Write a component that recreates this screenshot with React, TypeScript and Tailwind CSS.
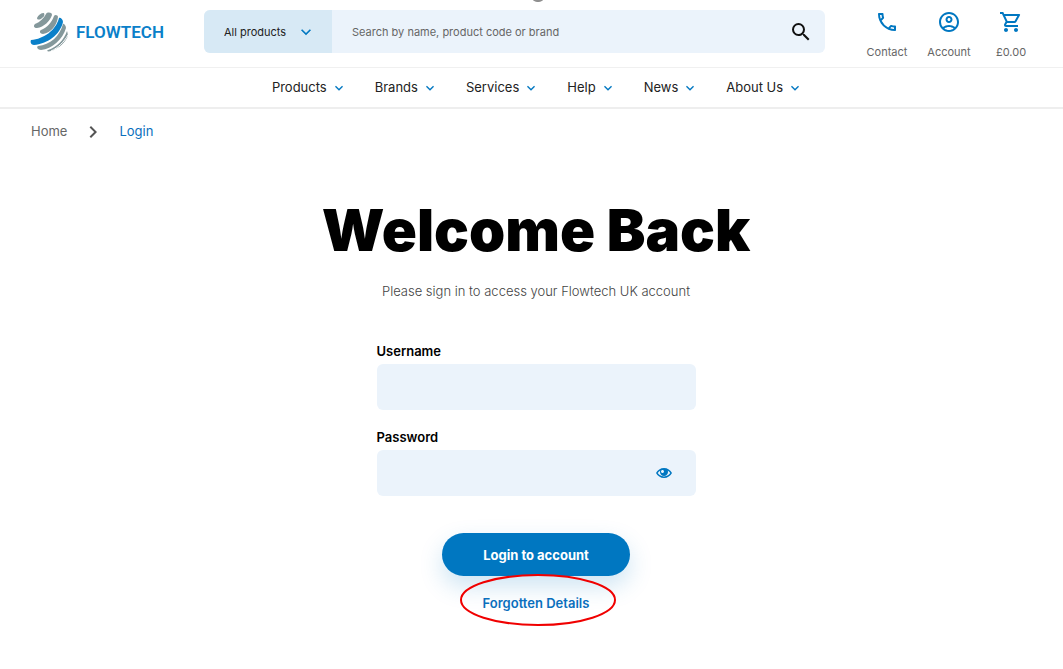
import { useState } from 'react';
import type { IconType } from 'react-icons';
import { ImEye } from 'react-icons/im';
import {
  MdChevronRight,
  MdExpandMore,
  MdOutlineAccountCircle,
  MdOutlinePhone,
  MdOutlineShoppingCart,
  MdSearch,
} from 'react-icons/md';

const NAV_ITEMS = ['Products', 'Brands', 'Services', 'Help', 'News', 'About Us'];

const HEADER_LINKS: { label: string; href: string; icon: IconType }[] = [
  { label: 'Contact', href: '#contact', icon: MdOutlinePhone },
  { label: 'Account', href: '#account', icon: MdOutlineAccountCircle },
  { label: '£0.00', href: '#basket', icon: MdOutlineShoppingCart },
];

export default function App() {
  return (
    <div className="min-h-screen overflow-hidden bg-white font-['Inter',sans-serif] text-[#222]">
      <Header />
      <MainNav />
      <Breadcrumb />
      <LoginForm />
    </div>
  );
}

function Header() {
  return (
    <header className="relative flex h-17 items-start border-b border-[#f0f0f0] pr-[21px] pl-[30px]">
      <span className="absolute -top-2 left-1/2 h-[10px] w-3 rounded-full bg-[#8f8f8f]" />

      <a href="#home" className="mt-3 flex w-[174px] shrink-0 items-center gap-2">
        <LogoMark />
        <span className="font-['Roboto','Liberation_Sans',sans-serif] text-[17px] leading-10 font-semibold text-[#0a80c9]">
          FLOWTECH
        </span>
      </a>

      <form
        role="search"
        onSubmit={(e) => e.preventDefault()}
        className="mt-[10px] flex h-[43px] flex-1 overflow-hidden rounded-md bg-[#ebf3fb]"
      >
        <div className="relative w-32 shrink-0 bg-[#d7e9f5]">
          <select
            aria-label="Search category"
            className="h-full w-full appearance-none pt-px pl-5 text-[11px] text-[#222] outline-none"
          >
            <option>All products</option>
          </select>
          <MdExpandMore className="pointer-events-none absolute top-3 right-4 size-5 text-[#0077c1]" />
        </div>
        <input
          type="search"
          aria-label="Search"
          placeholder="Search by name, product code or brand"
          className="min-w-0 flex-1 px-5 pt-px text-[11px] outline-none placeholder:text-[#666]"
        />
        <button type="submit" aria-label="Submit search" className="px-3">
          <MdSearch className="size-6 text-[#111]" />
        </button>
      </form>

      <div className="mt-[10px] ml-[31px] flex">
        {HEADER_LINKS.map(({ label, href, icon: Icon }) => (
          <a
            key={label}
            href={href}
            className="flex w-[62px] flex-col items-center gap-[10px] text-[11px] leading-4 text-[#666]"
          >
            <Icon className="size-6 text-[#0077c1]" />
            {label}
          </a>
        ))}
      </div>
    </header>
  );
}

function LogoMark() {
  return (
    <svg viewBox="0 0 38 40" className="h-10 w-[38px] shrink-0" fill="none" aria-hidden="true">
      <g fill="#84989b">
        <path d="M7 6C8 3 11 1 14 1C15 3 14 5 12 6C10 8 7 8 7 6Z" />
        <path d="M5 12C10 10 14 6 16 2C17 0 22 0 22 3C20 9 14 15 7 16C4 16 3 14 5 12Z" />
        <path d="M11 18C17 16 22 10 24 4C25 2 28 3 28 5C27 13 21 21 13 22C10 22 9 19 11 18Z" />
        <path d="M8 34C20 33 30 24 33 12C34 11 36 14 36 16C33 27 22 37 11 38C8 38 6 35 8 34Z" />
        <path d="M18 38C27 35 34 28 37 19C38 22 38 24 37 26C33 33 27 37 21 39C18 40 16 39 18 38Z" />
      </g>
      <path
        d="M1 28C14 27 26 18 29 6C30 5 33 7 33 10C30 23 17 32 4 33C1 33 0 30 1 28Z"
        fill="#0a80c9"
      />
      <g stroke="#fff" strokeWidth="1">
        <path d="M21 39C28 36 34 30 38 23" />
        <path d="M25 39C30 36 34 32 37 28" />
      </g>
    </svg>
  );
}

function MainNav() {
  return (
    <nav className="flex h-[41px] items-center justify-center gap-7 border-b-2 border-[#eeeeee] pt-px pl-3">
      {NAV_ITEMS.map((item) => (
        <a key={item} href="#nav" className="flex items-center gap-1 text-[13px]">
          {item}
          <MdExpandMore className="size-4 text-[#0077c1]" />
        </a>
      ))}
    </nav>
  );
}

function Breadcrumb() {
  return (
    <nav
      aria-label="Breadcrumb"
      className="flex h-11 items-center gap-[14px] pt-px pl-[31px] text-[13px]"
    >
      <a href="#home" className="text-[#666]">
        Home
      </a>
      <MdChevronRight className="size-6 text-[#555]" />
      <a href="#login" className="text-[#0a6fbd]">
        Login
      </a>
    </nav>
  );
}

function LoginForm() {
  const [showPassword, setShowPassword] = useState(false);

  return (
    <main className="flex flex-col items-center pt-[43px] pl-[9px]">
      <h1 className="text-[58px] leading-[68px] font-black text-black">Welcome Back</h1>
      <p className="mt-[17px] text-[13px] leading-5 font-light text-[#444]">
        Please sign in to access your Flowtech UK account
      </p>

      <form
        onSubmit={(e) => e.preventDefault()}
        className="mt-10 flex w-full max-w-[319px] flex-col text-[13px] leading-5"
      >
        <label htmlFor="username" className="font-semibold text-black">
          Username
        </label>
        <input
          id="username"
          type="text"
          className="mt-[3px] h-[46px] rounded-md bg-[#ebf3fb] px-4 outline-none"
        />

        <label htmlFor="password" className="mt-[17px] font-semibold text-black">
          Password
        </label>
        <div className="relative mt-[3px]">
          <input
            id="password"
            type={showPassword ? 'text' : 'password'}
            className="h-[46px] w-full rounded-md bg-[#ebf3fb] pr-14 pl-4 outline-none"
          />
          <button
            type="button"
            aria-label="Show password"
            onClick={() => setShowPassword(!showPassword)}
            className="absolute inset-y-0 right-6"
          >
            <ImEye className="size-4 text-[#0077c1]" />
          </button>
        </div>

        <button
          type="submit"
          className="mt-[37px] h-[43px] self-center rounded-full bg-[#0077c1] px-[41px] font-bold text-white shadow-[0_10px_24px_rgba(0,119,193,0.2)]"
        >
          Login to account
        </button>
      </form>

      <div className="relative mt-[17px]">
        <a
          href="#forgotten"
          className="block text-[13px] leading-5 font-semibold text-[#0a6fbd]"
        >
          Forgotten Details
        </a>
        <svg
          viewBox="0 0 160 54"
          className="pointer-events-none absolute -top-5 left-1/2 h-[54px] w-40 -translate-x-1/2"
          fill="none"
          aria-hidden="true"
        >
          <ellipse cx="82" cy="27" rx="77" ry="25" stroke="#f00000" strokeWidth="2" />
        </svg>
      </div>
    </main>
  );
}
